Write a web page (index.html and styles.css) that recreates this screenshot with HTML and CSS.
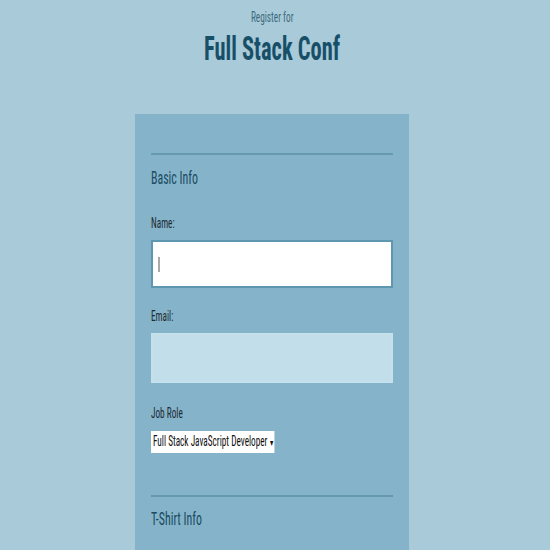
FILE: index.html
```html
<!DOCTYPE html>
<html>
<head>
<meta charset="utf-8">
<link rel="stylesheet" href="styles.css">
</head>
<body>
<header class="header">
  <span class="sub sq">Register for</span>
  <h1 class="title sq">Full Stack Conf</h1>
</header>
<form class="form">
  <fieldset class="set">
    <h2 class="legend"><span class="sq">Basic Info</span></h2>
    <label class="label label-first" for="name"><span class="sq">Name:</span></label>
    <div class="field-wrap">
      <input class="field field-focus" type="text" id="name">
      <span class="caret"></span>
    </div>
    <label class="label label-email" for="mail"><span class="sq">Email:</span></label>
    <input class="field field-email" type="email" id="mail">
    <label class="label label-job" for="title"><span class="sq">Job Role</span></label>
    <div class="select-wrap">
      <div class="select sq">Full Stack JavaScript Developer <span class="arrow">▾</span></div>
    </div>
  </fieldset>
  <fieldset class="set set-last">
    <h2 class="legend"><span class="sq">T-Shirt Info</span></h2>
  </fieldset>
</form>
</body>
</html>
```
FILE: styles.css
```css
html {
  overflow-y: scroll;
  background: #a9cad8;
}
body {
  margin: 0;
  padding: 0 6px 0 0;
  font-family: "Roboto Condensed", "Roboto", sans-serif;
}
.sq {
  display: inline-block;
  transform: scaleX(0.66);
  transform-origin: left center;
  white-space: nowrap;
}
.header {
  display: flex;
  flex-direction: column;
  align-items: center;
  padding-top: 9px;
}
.header .sq {
  transform-origin: center center;
}
.sub {
  font-size: 14px;
  color: #3d6a80;
  line-height: 16px;
}
.title {
  margin: 3px 0 0;
  font-size: 34px;
  line-height: 40px;
  color: #184f68;
  font-weight: bold;
}
.form {
  width: 242px;
  margin: 46px auto 0;
  padding: 39px 16px 200px;
  background: #85b4ca;
}
.set {
  border: 0;
  border-top: 2px solid #6499af;
  margin: 0;
  padding: 12px 0 42px;
  min-width: 0;
  display: flex;
  flex-direction: column;
}
.set-last {
  padding-top: 11px;
  padding-bottom: 0;
}
.legend {
  margin: 0;
  font-size: 18px;
  font-weight: normal;
  color: #1b4b62;
  line-height: 22px;
}
.label {
  font-size: 14px;
  color: #1c2a31;
  line-height: 16px;
  margin: 0 0 9px;
}
.label-first {
  margin-top: 26px;
}
.label-email {
  margin-top: 20px;
}
.label-job {
  margin-top: 22px;
  margin-bottom: 10px;
}
.field-wrap {
  position: relative;
  display: flex;
}
.field {
  box-sizing: border-box;
  height: 48px;
  width: 100%;
  border: 2px solid #c6e1ec;
  background: #c1deea;
  margin: 0;
  outline: none;
}
.field-focus {
  background: #fff;
  border-color: #5e97b0;
}
.field-email {
  height: 50px;
}
.caret {
  position: absolute;
  left: 7px;
  top: 17px;
  width: 2px;
  height: 15px;
  background: #aaa;
}
.select-wrap {
  display: flex;
}
.select {
  background: #fff;
  font-size: 14px;
  color: #111;
  padding: 1px 2px 1px 3px;
  line-height: 18px;
}
.arrow {
  font-size: 10px;
}
```
